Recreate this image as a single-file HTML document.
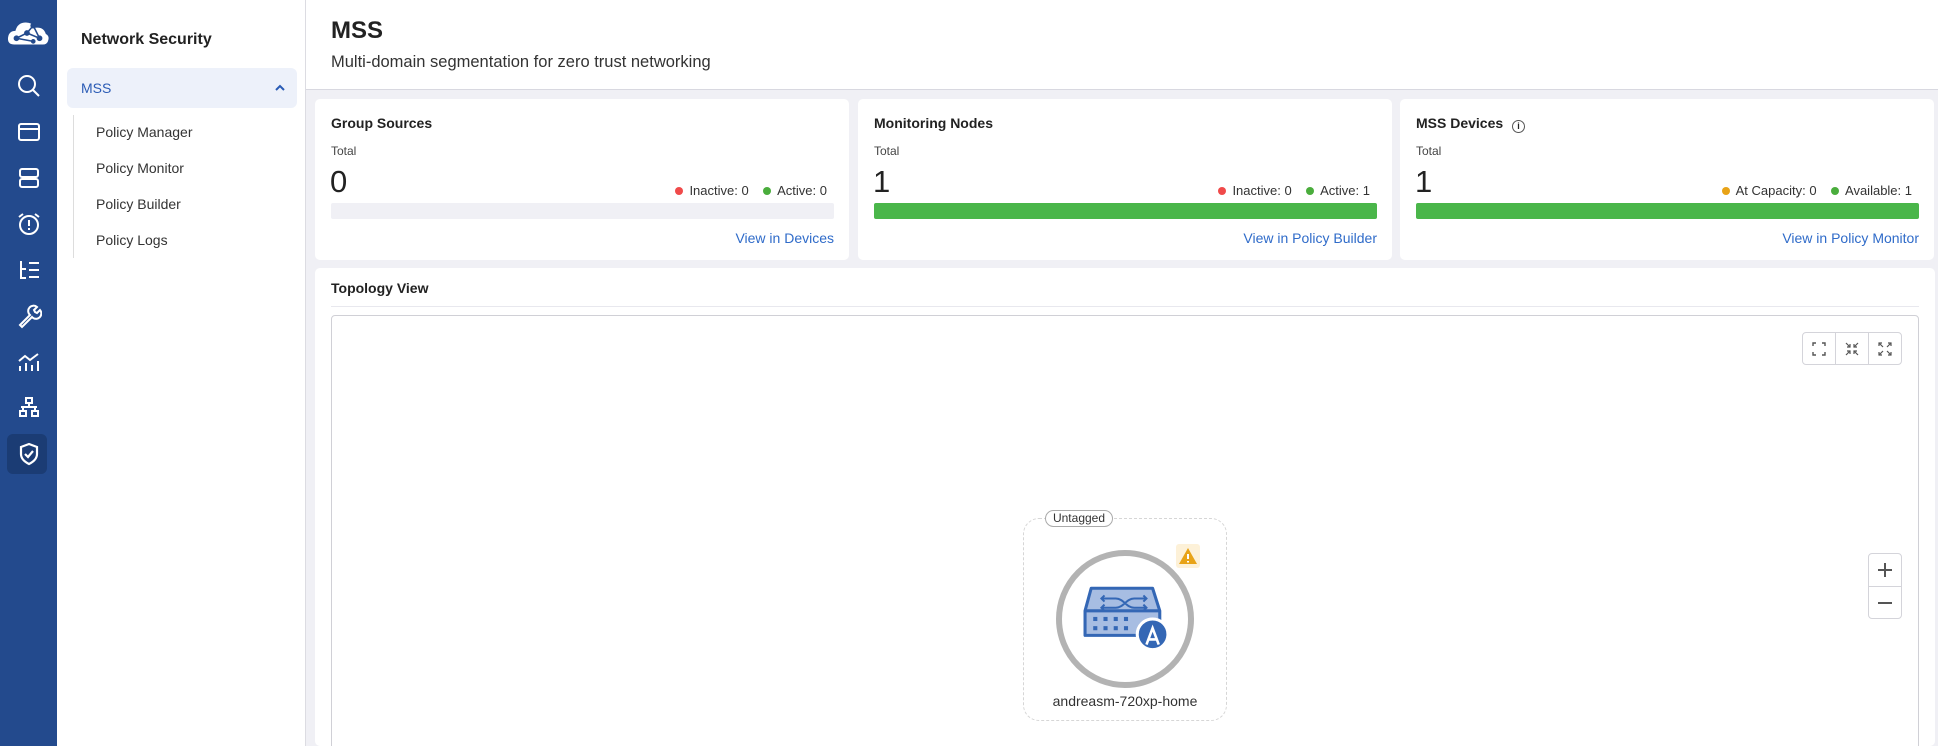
<!DOCTYPE html>
<html><head><meta charset="utf-8"><style>
*{box-sizing:border-box;margin:0;padding:0}
html,body{width:1938px;height:746px;overflow:hidden}
body{background:#f0f0f5;font-family:"Liberation Sans",sans-serif;color:#222;position:relative}
.abs{position:absolute}
.side{left:0;top:0;width:57px;height:746px;background:#234a8d}
.ico{position:absolute;left:16px;width:26px;height:26px}
.nav{left:57px;top:0;width:249px;height:746px;background:#fff;border-right:1px solid #dcdce2}
.hdr{left:306px;top:0;width:1632px;height:90px;background:#fff;border-bottom:1px solid #d8d8e0}
.card{background:#fff;border-radius:5px}
.ct{font-size:14px;font-weight:bold;color:#222}
.tot{font-size:12px;color:#444}
.big{font-size:31px;color:#222}
.leg{font-size:13px;color:#333}
.dot{display:inline-block;width:8px;height:8px;border-radius:50%;margin-right:6px;vertical-align:0}
.bar{height:16px;border-radius:2px}
.lnk{font-size:14px;color:#2f6bc9;text-align:right}
</style></head><body>
<div class="abs side">
<svg class="ico" style="left:6px;top:17px;width:44px;height:32px" viewBox="0 0 42 30"><path d="M8 26 Q1 26 2 19 Q3 13 9 13 Q11 5 19 5 Q25 5 28 10 Q36 9 38 16 Q42 18 40 23 Q39 26 35 26Z" fill="#fff"/><g stroke="#234a8d" stroke-width="1.5" fill="#234a8d"><path d="M10 20 L20 15 L26 8 L32 20 L20 15 M10 20 L26 23" fill="none"/><circle cx="10" cy="20" r="2"/><circle cx="20" cy="15" r="2"/><circle cx="26" cy="8" r="2"/><circle cx="32" cy="20" r="2"/><circle cx="26" cy="23" r="1.5"/></g></svg>
<svg class="ico" style="top:73px" viewBox="0 0 26 26" fill="none" stroke="#fff" stroke-width="2"><circle cx="11" cy="11" r="8"/><path d="M17 17l6 6"/></svg>
<svg class="ico" style="top:119px" viewBox="0 0 26 26" fill="none" stroke="#fff" stroke-width="2"><rect x="3" y="5" width="20" height="16" rx="2"/><path d="M3 10h20"/></svg>
<svg class="ico" style="top:165px" viewBox="0 0 26 26" fill="none" stroke="#fff" stroke-width="2"><rect x="4" y="4" width="18" height="8" rx="2"/><rect x="4" y="14" width="18" height="8" rx="2"/></svg>
<svg class="ico" style="top:211px" viewBox="0 0 26 26" fill="none" stroke="#fff" stroke-width="2"><circle cx="13" cy="14" r="9"/><path d="M13 9v6M13 17v2M3 6l4-3M23 6l-4-3"/></svg>
<svg class="ico" style="top:257px" viewBox="0 0 26 26" fill="none" stroke="#fff" stroke-width="2"><path d="M5 4v17h5M5 12h5M13 6h10M13 13h10M13 20h10"/></svg>
<svg class="ico" style="top:303px" viewBox="0 0 26 26" fill="none" stroke="#fff" stroke-width="2"><path d="M4 22l10-10a5 5 0 0 1 7-8l-3 3 1 2 2 1 3-3a5 5 0 0 1-8 7L6 24z"/></svg>
<svg class="ico" style="top:349px" viewBox="0 0 26 26" fill="none" stroke="#fff" stroke-width="2"><path d="M3 12l6-5 5 4 8-6M4 17v5M10 14v8M16 16v6M22 12v10"/></svg>
<svg class="ico" style="top:395px" viewBox="0 0 26 26" fill="none" stroke="#fff" stroke-width="2"><rect x="10" y="3" width="6" height="5"/><path d="M13 8v4M5 12h16M7 12v4M19 12v4"/><rect x="4" y="16" width="6" height="5"/><rect x="16" y="16" width="6" height="5"/></svg>
<div class="abs" style="left:7px;top:434px;width:40px;height:40px;background:#1b3c74;border-radius:6px"></div>
<svg class="ico" style="top:441px" viewBox="0 0 26 26" fill="none" stroke="#fff" stroke-width="2.2"><path d="M13 3l8 3v7c0 5-4 8-8 10-4-2-8-5-8-10V6z"/><path d="M9 13l3 3 5-6"/></svg>
</div>
<div class="abs nav">
<div class="abs" style="left:24px;top:31px;font-size:16px;font-weight:bold">Network Security</div>
<div class="abs" style="left:10px;top:68px;width:230px;height:40px;background:#edf1fa;border-radius:6px"><span class="abs" style="left:14px;top:12px;font-size:14px;color:#2a5bb5">MSS</span><svg class="abs" style="left:208px;top:16px" width="10" height="8" viewBox="0 0 10 8"><path d="M1 6l4-4 4 4" stroke="#2a5bb5" stroke-width="2" fill="none"/></svg></div>
<div class="abs" style="left:16px;top:115px;width:1px;height:143px;background:#ddd"></div>
<div class="abs" style="left:39px;top:114px;font-size:14px;color:#333;line-height:36px">Policy Manager<br>Policy Monitor<br>Policy Builder<br>Policy Logs</div>
</div>
<div class="abs hdr">
<div class="abs" style="left:25px;top:17px;font-size:24px;font-weight:bold">MSS</div>
<div class="abs" style="left:25px;top:53px;font-size:16.5px;color:#333">Multi-domain segmentation for zero trust networking</div>
</div>

<div class="abs card" style="left:315px;top:99px;width:534px;height:161px">
<div class="abs ct" style="left:16px;top:16px">Group Sources</div>
<div class="abs tot" style="left:16px;top:45px">Total</div>
<div class="abs big" style="left:15px;top:65px">0</div>
<div class="abs leg" style="right:22px;top:84px"><span class="dot" style="background:#f04a4a"></span>Inactive: 0 &nbsp;&nbsp; <span class="dot" style="background:#4aad3c"></span>Active: 0</div>
<div class="abs bar" style="left:16px;top:104px;width:503px;background:#f0f0f5"></div>
<div class="abs lnk" style="right:15px;top:131px">View in Devices</div>
</div>
<div class="abs card" style="left:858px;top:99px;width:534px;height:161px">
<div class="abs ct" style="left:16px;top:16px">Monitoring Nodes</div>
<div class="abs tot" style="left:16px;top:45px">Total</div>
<div class="abs big" style="left:15px;top:65px">1</div>
<div class="abs leg" style="right:22px;top:84px"><span class="dot" style="background:#f04a4a"></span>Inactive: 0 &nbsp;&nbsp; <span class="dot" style="background:#4aad3c"></span>Active: 1</div>
<div class="abs bar" style="left:16px;top:104px;width:503px;background:#4ab64a"></div>
<div class="abs lnk" style="right:15px;top:131px">View in Policy Builder</div>
</div>
<div class="abs card" style="left:1400px;top:99px;width:534px;height:161px">
<div class="abs ct" style="left:16px;top:16px">MSS Devices <span style="display:inline-block;width:13px;height:13px;border:1.3px solid #555;border-radius:50%;font-size:9px;text-align:center;line-height:11px;margin-left:5px;vertical-align:-1px">i</span></div>
<div class="abs tot" style="left:16px;top:45px">Total</div>
<div class="abs big" style="left:15px;top:65px">1</div>
<div class="abs leg" style="right:22px;top:84px"><span class="dot" style="background:#e8a317"></span>At Capacity: 0 &nbsp;&nbsp; <span class="dot" style="background:#4aad3c"></span>Available: 1</div>
<div class="abs bar" style="left:16px;top:104px;width:503px;background:#4ab64a"></div>
<div class="abs lnk" style="right:15px;top:131px">View in Policy Monitor</div>
</div>

<div class="abs card" style="left:315px;top:268px;width:1620px;height:478px">
<div class="abs ct" style="left:16px;top:12px">Topology View</div>
<div class="abs" style="left:16px;top:38px;width:1588px;height:1px;background:#e8e8ee"></div>
<div class="abs" style="left:16px;top:47px;width:1588px;height:440px;border:1px solid #d0d0d6;border-radius:4px"></div>
</div>
<div class="abs" style="left:1802px;top:332px;width:100px;height:33px;border:1px solid #d4d4da;border-radius:4px;background:#fff">
<div class="abs" style="left:32px;top:0;width:1px;height:31px;background:#d4d4da"></div>
<div class="abs" style="left:65px;top:0;width:1px;height:31px;background:#d4d4da"></div>
<svg class="abs" style="left:9px;top:9px" width="14" height="14" viewBox="0 0 14 14" fill="none" stroke="#555" stroke-width="1.4"><path d="M1 4V1h3M10 1h3v3M13 10v3h-3M4 13H1v-3"/></svg>
<svg class="abs" style="left:42px;top:9px" width="14" height="14" viewBox="0 0 14 14" fill="none" stroke="#555" stroke-width="1.2"><path d="M1 1l4 4M5 2v3H2M13 1l-4 4M9 2v3h3M1 13l4-4M2 9h3v3M13 13l-4-4M12 9H9v3"/></svg>
<svg class="abs" style="left:75px;top:9px" width="14" height="14" viewBox="0 0 14 14" fill="none" stroke="#555" stroke-width="1.2"><path d="M1 1l4 4M1 4V1h3M13 1l-4 4M10 1h3v3M1 13l4-4M1 10v3h3M13 13l-4-4M13 10v3h-3"/></svg>
</div>
<div class="abs" style="left:1868px;top:553px;width:34px;height:66px;border:1px solid #d4d4da;border-radius:4px;background:#fff">
<div class="abs" style="left:0;top:32px;width:32px;height:1px;background:#d4d4da"></div>
<div class="abs" style="left:9px;top:15px;width:14px;height:1.5px;background:#555"></div>
<div class="abs" style="left:15.3px;top:9px;width:1.5px;height:14px;background:#555"></div>
<div class="abs" style="left:9px;top:48px;width:14px;height:1.5px;background:#555"></div>
</div>
<div class="abs" style="left:1023px;top:518px;width:204px;height:203px;border:1px dashed #d6d6d6;border-radius:16px"></div>
<div class="abs" style="left:1045px;top:510px;width:68px;height:17px;border:1px solid #aaa;border-radius:9px;background:#fff;font-size:12px;text-align:center;line-height:15px;color:#333">Untagged</div>
<div class="abs" style="left:1056px;top:550px;width:138px;height:138px;border:6px solid #b3b3b3;border-radius:50%;background:#fff"></div>
<div class="abs" style="left:1176px;top:544px;width:24px;height:24px;background:#fdf1d8;border-radius:3px"><svg width="24" height="24" viewBox="0 0 24 24"><path d="M12 4L21 20H3Z" fill="#e8a317"/><path d="M12 10v5M12 17v1.5" stroke="#fff" stroke-width="2"/></svg></div>
<svg class="abs" style="left:1083px;top:586px" width="87" height="68" viewBox="0 0 85 66"><path d="M8 2h60l7 22v24H2V24z" fill="#a7bde2" stroke="#3467b5" stroke-width="3" stroke-linejoin="round"/><path d="M2 24h73" stroke="#3467b5" stroke-width="3"/><path d="M18 12h14c8 0 10 9 18 9h12M18 21h14c8 0 10-9 18-9h12M21 9l-3 3 3 3M21 18l-3 3 3 3M59 9l3 3-3 3M59 18l3 3-3 3" stroke="#3467b5" stroke-width="2" fill="none"/><g fill="#3467b5"><rect x="10" y="30" width="4" height="4"/><rect x="20" y="30" width="4" height="4"/><rect x="30" y="30" width="4" height="4"/><rect x="40" y="30" width="4" height="4"/><rect x="10" y="39" width="4" height="4"/><rect x="20" y="39" width="4" height="4"/><rect x="30" y="39" width="4" height="4"/><rect x="40" y="39" width="4" height="4"/></g><circle cx="68" cy="47" r="15" fill="#3467b5" stroke="#fff" stroke-width="3"/><path d="M62 57l6-16 6 16M64 52h8" stroke="#fff" stroke-width="2.5" fill="none"/></svg>
<div class="abs" style="left:1023px;top:693px;width:204px;text-align:center;font-size:14px;color:#333">andreasm-720xp-home</div>
</body></html>
